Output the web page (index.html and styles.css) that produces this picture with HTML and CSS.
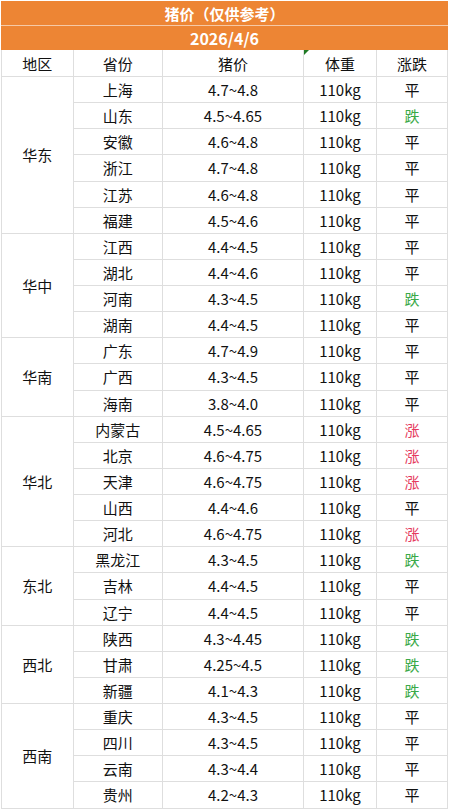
FILE: index.html
```html
<!DOCTYPE html>
<html lang="zh-CN">
<head>
<meta charset="utf-8">
<title>猪价（仅供参考）</title>
<link rel="stylesheet" href="styles.css">
</head>
<body>
<div class="sheet">
  <div class="banner title">猪价（仅供参考）</div>
  <div class="banner date">2026/4/6</div>
  <div class="grid">
    <div class="c head">地区</div>
    <div class="c head">省份</div>
    <div class="c head">猪价</div>
    <div class="c head note">体重</div>
    <div class="c head">涨跌</div>

    <div class="c region r6">华东</div>
    <div class="c">上海</div><div class="c">4.7~4.8</div><div class="c">110kg</div><div class="c">平</div>
    <div class="c">山东</div><div class="c">4.5~4.65</div><div class="c">110kg</div><div class="c down">跌</div>
    <div class="c">安徽</div><div class="c">4.6~4.8</div><div class="c">110kg</div><div class="c">平</div>
    <div class="c">浙江</div><div class="c">4.7~4.8</div><div class="c">110kg</div><div class="c">平</div>
    <div class="c">江苏</div><div class="c">4.6~4.8</div><div class="c">110kg</div><div class="c">平</div>
    <div class="c">福建</div><div class="c">4.5~4.6</div><div class="c">110kg</div><div class="c">平</div>

    <div class="c region r4">华中</div>
    <div class="c">江西</div><div class="c">4.4~4.5</div><div class="c">110kg</div><div class="c">平</div>
    <div class="c">湖北</div><div class="c">4.4~4.6</div><div class="c">110kg</div><div class="c">平</div>
    <div class="c">河南</div><div class="c">4.3~4.5</div><div class="c">110kg</div><div class="c down">跌</div>
    <div class="c">湖南</div><div class="c">4.4~4.5</div><div class="c">110kg</div><div class="c">平</div>

    <div class="c region r3">华南</div>
    <div class="c">广东</div><div class="c">4.7~4.9</div><div class="c">110kg</div><div class="c">平</div>
    <div class="c">广西</div><div class="c">4.3~4.5</div><div class="c">110kg</div><div class="c">平</div>
    <div class="c">海南</div><div class="c">3.8~4.0</div><div class="c">110kg</div><div class="c">平</div>

    <div class="c region r5">华北</div>
    <div class="c">内蒙古</div><div class="c">4.5~4.65</div><div class="c">110kg</div><div class="c up">涨</div>
    <div class="c">北京</div><div class="c">4.6~4.75</div><div class="c">110kg</div><div class="c up">涨</div>
    <div class="c">天津</div><div class="c">4.6~4.75</div><div class="c">110kg</div><div class="c up">涨</div>
    <div class="c">山西</div><div class="c">4.4~4.6</div><div class="c">110kg</div><div class="c">平</div>
    <div class="c">河北</div><div class="c">4.6~4.75</div><div class="c">110kg</div><div class="c up">涨</div>

    <div class="c region r3">东北</div>
    <div class="c">黑龙江</div><div class="c">4.3~4.5</div><div class="c">110kg</div><div class="c down">跌</div>
    <div class="c">吉林</div><div class="c">4.4~4.5</div><div class="c">110kg</div><div class="c">平</div>
    <div class="c">辽宁</div><div class="c">4.4~4.5</div><div class="c">110kg</div><div class="c">平</div>

    <div class="c region r3">西北</div>
    <div class="c">陕西</div><div class="c">4.3~4.45</div><div class="c">110kg</div><div class="c down">跌</div>
    <div class="c">甘肃</div><div class="c">4.25~4.5</div><div class="c">110kg</div><div class="c down">跌</div>
    <div class="c">新疆</div><div class="c">4.1~4.3</div><div class="c">110kg</div><div class="c down">跌</div>

    <div class="c region r4">西南</div>
    <div class="c">重庆</div><div class="c">4.3~4.5</div><div class="c">110kg</div><div class="c">平</div>
    <div class="c">四川</div><div class="c">4.3~4.5</div><div class="c">110kg</div><div class="c">平</div>
    <div class="c">云南</div><div class="c">4.3~4.4</div><div class="c">110kg</div><div class="c">平</div>
    <div class="c">贵州</div><div class="c">4.2~4.3</div><div class="c">110kg</div><div class="c">平</div>
  </div>
</div>
</body>
</html>
```

FILE: styles.css
```css
html, body {
  margin: 0;
  padding: 0;
  background: #ffffff;
}

body {
  font-family: "Noto Sans CJK SC", "Noto Sans", sans-serif;
  color: #111111;
}

.sheet {
  width: 447px;
  margin: 1px 0 0 1px;
}

.banner {
  background: #ed8534;
  color: #ffffff;
  font-weight: bold;
  font-size: 15px;
  text-align: center;
  display: flex;
  align-items: center;
  justify-content: center;
}

.title {
  height: 24px;
  border-bottom: 1px solid #f6c9a6;
}

.date {
  height: 24px;
  font-size: 16px;
}

.grid {
  display: grid;
  grid-template-columns: 70.7px 88px 140.6px 71.4px 70.6px;
  grid-template-rows: 26px;
  grid-auto-rows: 25.14px;
  gap: 1px;
  padding: 0 1px 1px 1px;
  background: #dedede;
  width: 445.3px;
}

.c {
  background: #ffffff;
  display: flex;
  align-items: center;
  justify-content: center;
  font-size: 15px;
  line-height: 1;
  white-space: nowrap;
}

.head {
  padding-top: 1px;
}

.note {
  position: relative;
}

.note::before {
  content: "";
  position: absolute;
  left: 0;
  top: 0;
  width: 0;
  height: 0;
  border-top: 5px solid #1f7a24;
  border-right: 5px solid transparent;
}

.region {
  grid-column: 1;
}

.r3 { grid-row: span 3; }
.r4 { grid-row: span 4; }
.r5 { grid-row: span 5; }
.r6 { grid-row: span 6; }

.up {
  color: #e53a5e;
}

.down {
  color: #3aa948;
}
```
